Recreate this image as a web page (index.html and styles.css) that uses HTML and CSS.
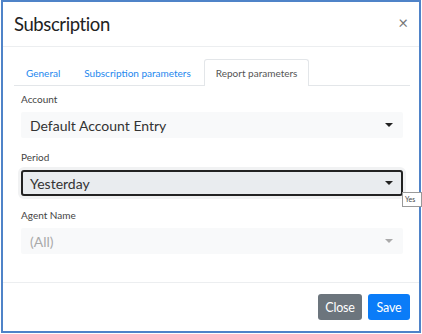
FILE: index.html
```html
<!DOCTYPE html>
<html>
<head>
<meta charset="utf-8">
<link rel="stylesheet" href="styles.css">
</head>
<body>
<div class="window">
  <div class="header">
    <h1 class="title">Subscription</h1>
    <span class="close-x">&times;</span>
  </div>
  <div class="body">
    <div class="tabs">
      <span class="tab">General</span>
      <span class="tab">Subscription parameters</span>
      <span class="tab active">Report parameters</span>
    </div>
    <div class="content">
      <div class="field">
        <div class="label">Account</div>
        <div class="select"><span>Default Account Entry</span><span class="caret"></span></div>
      </div>
      <div class="field">
        <div class="label">Period</div>
        <div class="select focused"><span>Yesterday</span><span class="caret"></span></div>
        <div class="tooltip">Yes</div>
      </div>
      <div class="field">
        <div class="label">Agent Name</div>
        <div class="select disabled"><span>(All)</span><span class="caret"></span></div>
      </div>
    </div>
  </div>
  <div class="footer">
    <button class="btn btn-close">Close</button>
    <button class="btn btn-save">Save</button>
  </div>
</div>
</body>
</html>
```
FILE: styles.css
```css
* { box-sizing: border-box; }
body {
  margin: 0;
  font-family: Lato, "Open Sans", sans-serif;
  color: #212529;
  background: #fff;
}
.window {
  margin-left: 1px;
  width: 420px;
  height: 333px;
  border: 2px solid #4f83c8;
  display: flex;
  flex-direction: column;
  background: #fff;
}
.header {
  height: 45px;
  display: flex;
  align-items: center;
  justify-content: space-between;
  padding: 0 11px 0 11px;
  border-bottom: 1px solid #eceef0;
}
.title {
  margin: 0;
  font-size: 18.5px;
  font-weight: 400;
  letter-spacing: -0.4px;
  color: #222;
}
.close-x {
  font-size: 17px;
  color: #777;
  line-height: 1;
  margin-top: -4px;
}
.body {
  flex: 1;
  padding: 12px 9px 0 11px;
}
.tabs {
  display: flex;
  height: 27px;
  border-bottom: 1px solid #e3e6e9;
  font-size: 10px;
}
.tab {
  padding: 0 11px;
  line-height: 26px;
  color: #2487ee;
  border: 1px solid transparent;
  border-bottom: none;
}
.tab.active {
  margin-left: 1px;
  color: #555;
  background: #fff;
  border-color: #e3e6e9;
  border-radius: 3px 3px 0 0;
  height: 27px;
  padding: 0 11px;
}
.content {
  padding: 6px 7px 0 7px;
}
.field {
  position: relative;
  margin-bottom: 12px;
}
.label {
  font-size: 10px;
  color: #444;
  line-height: 14px;
  margin-bottom: 6px;
}
.select {
  height: 26px;
  background: #f8f9fa;
  display: flex;
  align-items: center;
  justify-content: space-between;
  padding: 0 10px 0 9px;
  font-size: 14px;
  color: #333;
  border-radius: 2px;
}
.select.focused {
  background: #e9ecef;
  border: 2px solid #222;
  border-radius: 3px;
  padding: 0 8px 0 7px;
  box-shadow: 0 0 0 3px #f1f2f3;
}
.select.disabled {
  color: #aaa;
}
.caret {
  width: 0;
  height: 0;
  border-left: 4px solid transparent;
  border-right: 4px solid transparent;
  border-top: 4px solid #222;
}
.disabled .caret { border-top-color: #aaa; }
.tooltip {
  position: absolute;
  right: -19px;
  top: 42px;
  width: 20px;
  height: 15px;
  border: 1px solid #999;
  background: #fff;
  font-size: 7px;
  line-height: 13px;
  padding-left: 2px;
  color: #444;
  overflow: hidden;
}
.footer {
  height: 49px;
  border-top: 1px solid #eceef0;
  display: flex;
  justify-content: flex-end;
  align-items: center;
  gap: 6px;
  padding: 0 9px 0 0;
}
.btn {
  font-family: inherit;
  font-size: 12.5px;
  letter-spacing: -0.2px;
  color: #fff;
  border: none;
  border-radius: 3px;
  height: 26px;
  padding: 0 6px;
}
.btn-close { background: #6c757d; width: 44px; }
.btn-save { background: #0a7cf8; width: 42px; }
```
